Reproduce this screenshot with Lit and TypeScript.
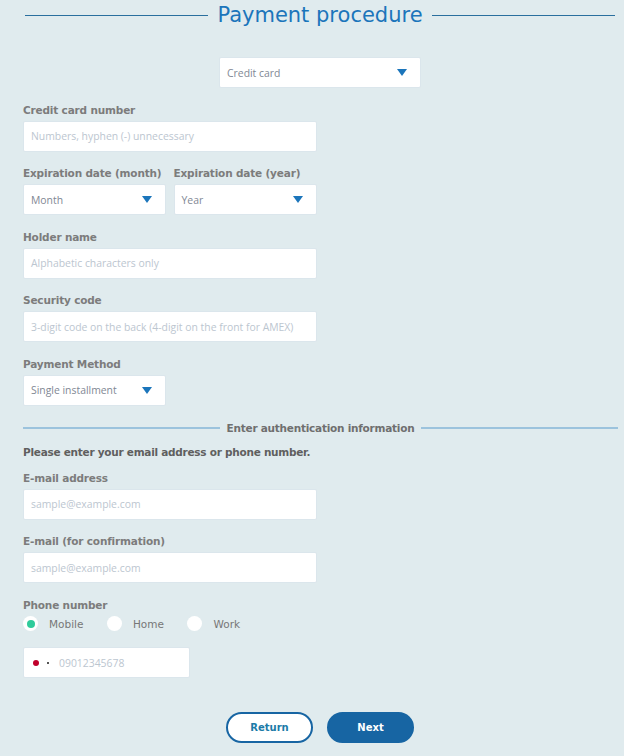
import { LitElement, html, css } from 'lit';
import { customElement } from 'lit/decorators.js';

@customElement('app-root')
export class AppRoot extends LitElement {
  static styles = css`
    :host {
      display: block;
      height: 756px;
      overflow: hidden;
      background: #e0ebee;
      font-family: 'DejaVu Sans', sans-serif;
      color: #7a7a7a;
    }

    .page {
      padding: 0 6px 0 23px;
    }

    .title {
      display: flex;
      align-items: center;
      gap: 9px;
      height: 30px;
      margin: 0 3px 0 2px;
      color: #1b75bb;
      font-size: 21px;
      font-weight: 400;
    }

    .title::before,
    .title::after {
      content: '';
      flex: 1;
      height: 1px;
      background: #2a6f9e;
    }

    .top {
      display: flex;
      justify-content: center;
      margin: 27px 0 15.900px;
      padding-right: 1px;
    }

    .box {
      display: flex;
      align-items: center;
      box-sizing: border-box;
      height: 31px;
      padding: 0 7px;
      background: #fff;
      border: 1px solid #dbe6ec;
      border-radius: 2px;
      font-family: 'Open Sans', sans-serif;
      font-size: 10.400px;
    }

    .wide { width: 293.500px; }
    .sel { justify-content: space-between; color: #7f8894; }
    .top .sel { width: 202px; }
    .placeholder { color: #bcc6d0; }

    .method { width: 142.500px; }

    .sel svg {
      width: 10px;
      height: 7px;
      margin-right: 6px;
    }

    .field { margin-bottom: 15.500px; }

    .label {
      display: block;
      height: 17px;
      line-height: 12px;
      font-size: 10.500px;
      font-weight: 700;
      letter-spacing: -0.170px;
      color: #7c7c7c;
      white-space: nowrap;
    }

    .dates {
      display: grid;
      grid-template-columns: 142.500px 143px;
      gap: 8px;
    }

    .divider {
      display: flex;
      align-items: center;
      gap: 7px;
      height: 16px;
      margin-top: -1.100px;
      font-size: 10.500px;
      font-weight: 700;
      letter-spacing: -0.240px;
      color: #6f6f6f;
      white-space: nowrap;
    }

    .divider::before,
    .divider::after {
      content: '';
      flex: 1;
      height: 2px;
      background: #9cc3dd;
    }

    .note {
      height: 16px;
      line-height: 16px;
      margin: 8px 0 11.600px;
      font-size: 10.500px;
      font-weight: 700;
      letter-spacing: -0.260px;
      color: #5f5f5f;
    }

    .radios {
      display: flex;
      align-items: center;
      height: 22px;
      margin: -3.200px 0 12.600px;
      font-size: 10.500px;
      color: #777;
    }

    .radio {
      display: flex;
      align-items: center;
      justify-content: center;
      flex: none;
      width: 15px;
      height: 15px;
      background: #fff;
      border-radius: 50%;
    }

    .radio i {
      width: 8px;
      height: 8px;
      background: #2fcb9b;
      border-radius: 50%;
    }

    .radios span { margin: 0 23.500px 0 11px; }
    .radios span:last-child { margin-right: 0; }

    .phone { width: 166.500px; }

    .flag {
      width: 6px;
      height: 6px;
      margin-left: 2px;
      background: #c0002b;
      border-radius: 50%;
    }

    .dot {
      width: 2px;
      height: 2px;
      margin: 0 10px 0 8px;
      background: #555;
    }

    .actions {
      display: flex;
      justify-content: center;
      gap: 14px;
      margin-top: 34px;
      padding-right: 1px;
    }

    button {
      box-sizing: border-box;
      width: 87px;
      height: 31px;
      padding: 0;
      border: 2px solid #1765a3;
      border-radius: 16px;
      font-family: 'DejaVu Sans', sans-serif;
      font-size: 10px;
      font-weight: 700;
    }

    .ghost { background: #fff; color: #1c7ba8; }
    .solid { background: #1765a3; color: #fff; }
  `;

  private arrow() {
    return html`<svg viewBox="0 0 10 7"><path d="M0 0h10L5 7z" fill="#1b75bb"></path></svg>`;
  }

  private select(text: string) {
    return html`<div class="box sel">${text}${this.arrow()}</div>`;
  }

  private input(label: string, placeholder: string) {
    return html`
      <div class="field">
        <label class="label">${label}</label>
        <div class="box wide placeholder">${placeholder}</div>
      </div>
    `;
  }

  render() {
    return html`
      <div class="page">
        <h1 class="title">Payment procedure</h1>
        <div class="top">${this.select('Credit card')}</div>
        ${this.input('Credit card number', 'Numbers, hyphen (-) unnecessary')}
        <div class="field dates">
          <div>
            <label class="label">Expiration date (month)</label>
            ${this.select('Month')}
          </div>
          <div>
            <label class="label">Expiration date (year)</label>
            ${this.select('Year')}
          </div>
        </div>
        ${this.input('Holder name', 'Alphabetic characters only')}
        ${this.input('Security code', '3-digit code on the back (4-digit on the front for AMEX)')}
        <div class="field">
          <label class="label">Payment Method</label>
          <div class="method">${this.select('Single installment')}</div>
        </div>
        <div class="divider">Enter authentication information</div>
        <div class="note">Please enter your email address or phone number.</div>
        ${this.input('E-mail address', 'sample@example.com')}
        ${this.input('E-mail (for confirmation)', 'sample@example.com')}
        <label class="label">Phone number</label>
        <div class="radios">
          <div class="radio"><i></i></div><span>Mobile</span>
          <div class="radio"></div><span>Home</span>
          <div class="radio"></div><span>Work</span>
        </div>
        <div class="box phone placeholder">
          <div class="flag"></div><div class="dot"></div>09012345678
        </div>
        <div class="actions">
          <button class="ghost">Return</button>
          <button class="solid">Next</button>
        </div>
      </div>
    `;
  }
}
